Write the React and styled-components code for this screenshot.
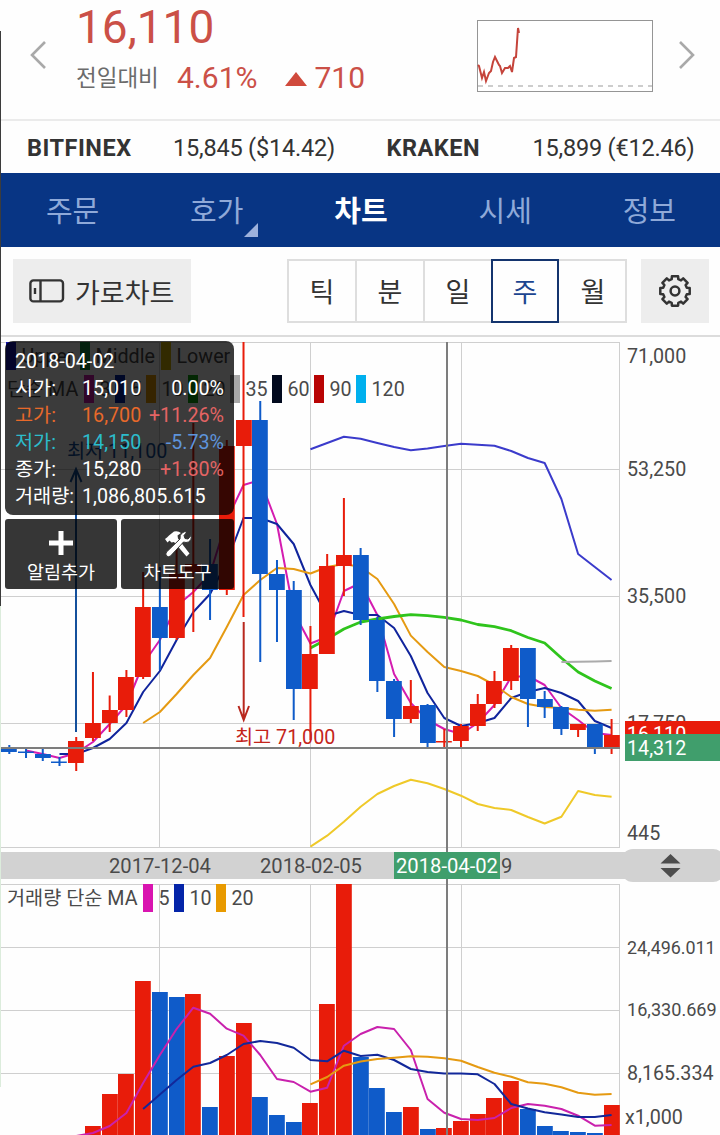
import styled, { createGlobalStyle } from "styled-components";

const UP = "#e81c0a";
const DOWN = "#0f5bc9";

const FIRST_X = 9.3;
const STEP = 16.73;
const xAt = (index) => FIRST_X + STEP * index;

// [high, bodyTop, bodyBottom, low, color]
const candles = [
  [745, 747, 752, 754, DOWN],
  [748, 751.5, 753, 758, DOWN],
  [748.5, 754, 758, 761, DOWN],
  [757, 761.5, 763, 766, DOWN],
  [737, 741, 763, 771, UP],
  [672, 723, 738, 741, UP],
  [695.5, 710, 723, 732, UP],
  [670, 677, 710, 717, UP],
  [572, 607, 677, 679, UP],
  [567, 607, 638, 670, DOWN],
  [547, 574, 638, 640, UP],
  [423, 564, 572, 632, UP],
  [539, 564, 590, 620, DOWN],
  [440, 446, 590, 595, UP],
  [342, 420, 446, 617, UP],
  [401, 420, 574, 662, DOWN],
  [560, 574, 590, 642, DOWN],
  [581, 590, 689, 720, DOWN],
  [626, 654, 689, 740, UP],
  [554, 566, 654, 654, UP],
  [498, 555, 566, 596, UP],
  [548, 555, 620, 625, DOWN],
  [617, 620, 681, 692, DOWN],
  [679, 681, 719, 737, DOWN],
  [680, 706, 719, 723, UP],
  [704, 705, 743, 747, DOWN],
  [729, 741, 742.5, 747, UP],
  [724, 726, 741, 747, UP],
  [694, 704, 726, 731, UP],
  [671, 681, 704, 708, UP],
  [645, 648, 681, 690, UP],
  [648, 648, 699, 727, DOWN],
  [691, 699, 707, 718, DOWN],
  [706, 707, 729, 735, DOWN],
  [724, 724, 730, 737, UP],
  [724, 724, 747, 754, DOWN],
  [719, 735, 747, 754, UP],
];

const volumes = [
  [1126, UP], [1094, UP], [1074, UP], [981, UP], [992, DOWN], [997, DOWN],
  [994, UP], [1107, DOWN], [1056, UP], [1023, UP], [1097, DOWN], [1115, DOWN],
  [1122, DOWN], [1103, UP], [1004, UP], [884, UP], [1057, DOWN], [1088, DOWN],
  [1112, DOWN], [1107, UP], [1129, DOWN], [1128, UP], [1121, UP], [1114, UP],
  [1098, UP], [1081, UP], [1109, DOWN], [1126, DOWN], [1131, DOWN],
  [1132, DOWN], [1133, DOWN], [1105, UP],
];

const priceLines = [
  { color: "#d41cb0", from: 1, values: [750.5, 754, 758, 753, 742, 724, 705, 664, 640, 606, 592, 574, 520, 485, 480, 524, 612, 643.5, 637, 591, 583, 615, 674, 703, 720, 729, 734, 723, 705, 677, 676, 685, 708, 720, 733, 735] },
  { color: "#10249c", from: 3, values: [754, 754, 748, 739, 723, 692, 671, 640, 612, 594, 562, 518, 518, 524, 544, 585, 616, 611, 615, 615, 628, 656, 693, 718, 726, 723, 718, 698, 692, 688, 693, 701, 721, 728] },
  { color: "#e59a12", from: 8, values: [723, 712, 694, 675, 658, 627, 595, 580, 568, 569, 573.5, 567, 564, 567, 579, 604, 635.6, 652, 667, 671, 676, 685, 697, 704, 707, 708, 709.7, 710.7, 709.7] },
  { color: "#2fc41c", width: 2.8, from: 18, values: [648, 639, 629, 622, 619, 616.5, 614.7, 615.7, 617.3, 620, 624.5, 626.7, 630.7, 637.5, 643, 658, 672, 681, 688.5] },
  { color: "#ababab", from: 33, values: [662, 661.8, 661.4, 661] },
  { color: "#3b3bcb", from: 18, values: [449.3, 443, 436.7, 438.7, 443, 447, 450.3, 448.5, 446, 443.7, 444.8, 445.7, 451, 458, 463, 499, 554, 567, 580] },
  { color: "#efc929", from: 18, values: [846.7, 835.7, 821.7, 806.7, 794, 786, 779.7, 783.3, 789, 795.7, 804, 808, 810, 817, 823.5, 816.7, 791, 795, 796.7] },
];

const volumeLines = [
  { color: "#c921ad", from: 4, values: [1136, 1133, 1126, 1113, 1083, 1055, 1029, 1007.7, 1013.7, 1028.7, 1035.7, 1055, 1079, 1082, 1091.7, 1087.7, 1045.7, 1034, 1027, 1029, 1050, 1099, 1112.7, 1119, 1120, 1118, 1108, 1104, 1105.7, 1109, 1115.7, 1125.7, 1125] },
  { color: "#12289a", from: 8, values: [1109, 1094.5, 1080, 1066.7, 1063, 1055, 1044, 1041, 1043, 1047.7, 1060, 1061.3, 1050.7, 1056, 1054.7, 1060, 1069, 1072, 1073.5, 1073.5, 1074.3, 1084, 1104, 1108.5, 1112.3, 1114.5, 1117, 1117, 1115] },
  { color: "#e59a12", from: 18, values: [1084.3, 1077, 1065.7, 1061.5, 1059, 1057.7, 1056.3, 1056.7, 1058.3, 1060.7, 1067, 1072.7, 1076.7, 1082.3, 1083.7, 1087.3, 1092.7, 1094.7, 1094] },
];

const bandLegend = [
  { x: 6, color: "#1414b4", label: "Upper" },
  { x: 80, color: "#0f8a3c", label: "Middle" },
  { x: 161, color: "#d9b400", label: "Lower" },
];

const maLegend = [
  { x: 84, color: "#d41cb0", label: "3" },
  { x: 115, color: "#0424a8", label: "5" },
  { x: 146, color: "#e89a00", label: "10" },
  { x: 188, color: "#0fa80f", label: "20" },
  { x: 230, color: "#a8a8a8", label: "35" },
  { x: 272, color: "#020a1e", label: "60" },
  { x: 314, color: "#b80404", label: "90" },
  { x: 356, color: "#00b0ee", label: "120" },
];

const volumeLegend = [
  { x: 143, color: "#d914b0", label: "5" },
  { x: 174, color: "#0424a8", label: "10" },
  { x: 216, color: "#e89a00", label: "20" },
];

const quoteRows = [
  { label: "시가:", value: "15,010", rate: "0.00%", color: "#fff", rateColor: "#fff" },
  { label: "고가:", value: "16,700", rate: "+11.26%", color: "#e8692a", rateColor: "#e46464" },
  { label: "저가:", value: "14,150", rate: "-5.73%", color: "#2cbccb", rateColor: "#5e94dc" },
  { label: "종가:", value: "15,280", rate: "+1.80%", color: "#fff", rateColor: "#e46464" },
  { label: "거래량:", value: "1,086,805.615", color: "#fff" },
];

const tabs = [
  { label: "주문" },
  { label: "호가", more: true },
  { label: "차트", active: true },
  { label: "시세" },
  { label: "정보" },
];

const periods = ["틱", "분", "일", "주", "월"];

const gearPath = () => {
  const teeth = 8;
  const points = [];
  for (let i = 0; i < teeth; i++) {
    const base = (i * 2 * Math.PI) / teeth - Math.PI / 2;
    [[-0.27, 12.2], [-0.21, 15], [0.21, 15], [0.27, 12.2]].forEach(([offset, r]) => {
      points.push(`${(17 + r * Math.cos(base + offset)).toFixed(1)},${(17 + r * Math.sin(base + offset)).toFixed(1)}`);
    });
  }
  return `M${points.join("L")}Z`;
};

const Series = ({ color, width = 2, from, values }) => (
  <polyline
    fill="none"
    stroke={color}
    strokeWidth={width}
    strokeLinejoin="round"
    points={values.map((y, i) => `${xAt(from + i)},${y}`).join(" ")}
  />
);

const Legend = ({ items, top }) => (
  <g>
    {items.map((item) => (
      <g key={item.label}>
        <rect x={item.x} y={top} width="10" height="28" fill={item.color} />
        <ChartText x={item.x + 15.5} y={top + 21}>{item.label}</ChartText>
      </g>
    ))}
  </g>
);

const Chart = () => (
  <ChartCanvas viewBox="0 337 720 798">
    <g stroke="#cfcfcf" strokeWidth="1">
      {[342.5, 469.5, 596.5, 723.5, 847.5, 884.5, 947.5, 1010.5, 1073.5].map((y) => (
        <line key={y} x1="1" x2="620" y1={y} y2={y} />
      ))}
      {[159.5, 310.5, 461.5, 619.5].map((x) => (
        <path key={x} d={`M${x} 342V848M${x} 884V1135`} />
      ))}
    </g>

    <Legend items={bandLegend} top={342} />
    <ChartText x="7" y="396">단순 MA</ChartText>
    <Legend items={maLegend} top={375} />

    {priceLines.map((line) => <Series key={line.color} {...line} />)}

    {candles.map(([high, top, bottom, low, color], i) => (
      <g key={i} fill={color}>
        <rect x={xAt(i) - 1} y={high} width="2" height={low - high} />
        <rect x={Math.max(1, Math.round(xAt(i) - 8))} y={top} width="15.8" height={bottom - top} />
      </g>
    ))}

    <path d="M76 732V470M70.5 482L76 469L81.5 482" fill="none" stroke="#14509c" strokeWidth="2" />
    <ChartText x="67" y="458" $color="#14509c">최저 11,100</ChartText>
    <path d="M243.7 622V719M238.5 706L243.7 720L249 706" fill="none" stroke="#b8281e" strokeWidth="2" />
    <ChartText x="235" y="744" $color="#c4241a">최고 71,000</ChartText>

    <ChartText x="7" y="905">거래량 단순 MA</ChartText>
    <Legend items={volumeLegend} top={884} />
    {volumes.map(([top, color], i) => (
      <rect key={i} x={Math.round(xAt(i + 5) - 8)} y={top} width="15.8" height={1135 - top} fill={color} />
    ))}
    {volumeLines.map((line) => <Series key={line.color} {...line} />)}

    <path d="M1 748H620M447 342V1135" stroke="#7d7d7d" strokeWidth="2" />

    <ChartText x="627" y="363">71,000</ChartText>
    <ChartText x="627" y="476">53,250</ChartText>
    <ChartText x="627" y="603">35,500</ChartText>
    <ChartText x="627" y="730">17,750</ChartText>
    <rect x="625" y="721" width="95" height="27" fill="#e81c0a" />
    <ChartText x="627" y="741" $color="#fff">16,110</ChartText>
    <rect x="625" y="734" width="95" height="27" fill="#409e6c" />
    <ChartText x="627" y="755" $color="#fff">14,312</ChartText>
    <ChartText x="627" y="840">445</ChartText>
    <ChartText x="627" y="954" $size={17.9}>24,496.011</ChartText>
    <ChartText x="627" y="1016" $size={18.1}>16,330.669</ChartText>
    <ChartText x="627" y="1080" $size={19.7}>8,165.334</ChartText>
    <ChartText x="625" y="1124">x1,000</ChartText>

    <rect x="1" y="852" width="640" height="27" fill="#d2d2d2" />
    <rect x="621" y="849" width="104" height="33" rx="12" fill="#d2d2d2" />
    <path d="M660.5 863.5L670.5 854L680.5 863.5ZM660.5 868L670.5 877.5L680.5 868Z" fill="#4d4d4d" />
    <ChartText x="109" y="873" $size={20.2}>2017-12-04</ChartText>
    <ChartText x="260" y="873" $size={20.2}>2018-02-05</ChartText>
    <ChartText x="501" y="873" $size={20.2}>9</ChartText>
    <rect x="394" y="852" width="106" height="27" fill="#409e6c" />
    <ChartText x="396" y="873" $color="#fff" $size={20.2}>2018-04-02</ChartText>
  </ChartCanvas>
);

const App = () => {
  return (
    <Page>
      <GlobalStyle />
      <Header>
        <Arrow viewBox="0 0 16 28"><path d="M15 1L2 14L15 27" /></Arrow>
        <PriceBlock>
          <Price>16,110</Price>
          <Change>
            <ChangeLabel>전일대비</ChangeLabel>
            <ChangeValue>4.61%</ChangeValue>
            <UpMark viewBox="0 0 22 14"><path d="M11 0L22 14H0Z" /></UpMark>
            <ChangeValue>710</ChangeValue>
          </Change>
        </PriceBlock>
        <Spark viewBox="0 0 176 72">
          <rect x="0.5" y="0.5" width="175" height="71" fill="#fff" stroke="#959595" />
          <path d="M1 66H175" stroke="#bdbdbd" strokeWidth="1.5" strokeDasharray="5 5" />
          <path
            d="M1 45L2 46L5 58L7 52L9 61L12 53L14 51L16 42L18 37L20 41L22 45L23 46L25 53L28 48L31 48L33 46L35 52L37 38L39 37L41 8L42 13"
            fill="none"
            stroke="#c5443b"
            strokeWidth="2"
          />
        </Spark>
        <Arrow viewBox="0 0 16 28"><path d="M1 1L14 14L1 27" /></Arrow>
      </Header>

      <Exchanges>
        <Exchange><ExchangeName>BITFINEX</ExchangeName>15,845 ($14.42)</Exchange>
        <Exchange><ExchangeName>KRAKEN</ExchangeName>15,899 (€12.46)</Exchange>
      </Exchanges>

      <Nav>
        {tabs.map((tab) => (
          <Tab key={tab.label} $active={tab.active}>
            {tab.label}
            {tab.more ? <Corner /> : null}
          </Tab>
        ))}
      </Nav>

      <Toolbar>
        <LandscapeButton>
          <svg width="36" height="24" viewBox="0 0 36 24" fill="none" stroke="#333" strokeWidth="2.4">
            <rect x="1.4" y="1.4" width="32.6" height="21" rx="3" />
            <path d="M11.5 1V22M6 9V15" />
          </svg>
          가로차트
        </LandscapeButton>
        <Periods>
          {periods.map((period) => <Period key={period} $active={period === "주"}>{period}</Period>)}
        </Periods>
        <SettingsButton>
          <svg width="34" height="34" viewBox="0 0 34 34" fill="none" stroke="#333" strokeWidth="2.5" strokeLinejoin="round">
            <path d={gearPath()} />
            <circle cx="17" cy="17" r="4.4" />
          </svg>
        </SettingsButton>
      </Toolbar>

      <ChartArea>
        <Chart />
        <Overlay>
          <QuoteBox>
            <QuoteDate>2018-04-02</QuoteDate>
            {quoteRows.map((row) => (
              <QuoteRow key={row.label} $color={row.color}>
                <QuoteLabel>{row.label}</QuoteLabel>
                <span>{row.value}</span>
                {row.rate ? <QuoteRate $color={row.rateColor}>{row.rate}</QuoteRate> : null}
              </QuoteRow>
            ))}
          </QuoteBox>
          <Tools>
            <ToolButton>
              <svg width="26" height="26" viewBox="0 0 26 26" stroke="#fff" strokeWidth="5">
                <path d="M13 1V25M1 13H25" />
              </svg>
              알림추가
            </ToolButton>
            <ToolButton>
              <svg width="28" height="28" viewBox="0 0 28 28" fill="#fff">
                <path d="M5 5.5L10 1.5Q14 0.5 17 3L13.5 5.5L14 8.5L25.5 23.5L22.5 26.5L10 12L7.5 12.5L5.5 10.5L3.5 12.5L1 9L3 7.5Z" />
                <path
                  d="M27 5.5Q28 10 24.5 12Q22 13 19.5 12L6.5 26Q4.5 27.5 2.5 26Q1 24 2.5 22L16 9Q15.5 5 18 3Q20.5 1 23 2L20 5.5L21 8.5L24 9Z"
                  stroke="#333"
                  strokeWidth="1"
                />
              </svg>
              차트도구
            </ToolButton>
          </Tools>
        </Overlay>
      </ChartArea>
    </Page>
  );
};

const GlobalStyle = createGlobalStyle`
  * {
    box-sizing: border-box;
  }

  body {
    margin: 0;
    background-color: #fefefe;
    font-family: Roboto, "Noto Sans CJK KR", sans-serif;
  }

  svg {
    flex: none;
    display: block;
  }
`;

const Page = styled.div`
  width: 720px;
  height: 1135px;
  overflow: hidden;
  padding-left: 1px;
  background: linear-gradient(#fefefe 31px, #3c3c3c 31px, #3c3c3c 606px, #dcecdc 606px, #dcecdc 1087px, #fefefe 1087px) left / 1px 100% no-repeat;
`;

const Header = styled.div`
  display: flex;
  align-items: flex-start;
  height: 121px;
  padding: 0 25px 0 29px;
  border-bottom: 2px solid #ebebeb;
`;

const Arrow = styled.svg`
  width: 16px;
  height: 28px;
  margin-top: 41px;
  fill: none;
  stroke: #a9a9a9;
  stroke-width: 2.6px;
`;

const PriceBlock = styled.div`
  width: 431px;
  padding: 0 0 0 30px;
  color: #cb5047;
`;

const Price = styled.div`
  height: 54px;
  font-size: 46px;
  line-height: 54px;
`;

const Change = styled.div`
  display: flex;
  align-items: center;
  height: 46px;
`;

const ChangeLabel = styled.span`
  width: 101px;
  margin-top: -2px;
  color: #6b6b6b;
  font-size: 22.5px;
`;

const ChangeValue = styled.span`
  font-size: 30px;
`;

const UpMark = styled.svg`
  width: 22px;
  height: 14px;
  margin: 3px 7px 0 28px;
  fill: #d04a3c;
`;

const Spark = styled.svg`
  width: 176px;
  height: 72px;
  margin: 20px 26px 0 0;
`;

const Exchanges = styled.div`
  display: flex;
  height: 52px;
`;

const Exchange = styled.div`
  display: flex;
  align-items: center;
  width: 360px;
  padding: 2px 0 0 26px;
  color: #333;
  font-size: 23.5px;
  letter-spacing: -0.2px;
`;

const ExchangeName = styled.span`
  width: 146px;
  font-weight: 700;
  letter-spacing: 0.5px;
`;

const Nav = styled.div`
  display: flex;
  height: 74px;
  background-color: #083584;
`;

const Tab = styled.div`
  position: relative;
  display: flex;
  flex: 0 0 144.2px;
  align-items: center;
  justify-content: center;
  padding: 0 1px 3px 0;
  color: ${({ $active }) => ($active ? "#fff" : "#8fa9d8")};
  font-size: 29px;
  font-weight: ${({ $active }) => ($active ? 700 : 400)};
`;

const Corner = styled.span`
  position: absolute;
  right: 31px;
  bottom: 10px;
  border-left: 14px solid transparent;
  border-bottom: 14px solid #9db1dc;
`;

const Toolbar = styled.div`
  display: flex;
  align-items: center;
  height: 90px;
  padding: 0 11px 0 12px;
  border-bottom: 2px solid #dcdcdc;
  color: #333;
  font-size: 27px;
`;

const LandscapeButton = styled.div`
  display: flex;
  align-items: center;
  gap: 10px;
  width: 178px;
  height: 64px;
  padding-left: 16px;
  background-color: #ededed;
`;

const Periods = styled.div`
  display: flex;
  margin-left: 96px;
`;

const Period = styled.div`
  position: relative;
  z-index: ${({ $active }) => ($active ? 1 : 0)};
  display: flex;
  align-items: center;
  justify-content: center;
  width: ${({ $active }) => ($active ? 68 : 70)}px;
  height: 64px;
  margin-right: ${({ $active }) => ($active ? 0 : -2)}px;
  padding-bottom: 1px;
  border: 2px solid ${({ $active }) => ($active ? "#14346e" : "#dedede")};
  color: ${({ $active }) => ($active ? "#1c4590" : "#333")};

  &:last-child {
    width: 68px;
    margin-right: 0;
    padding-left: 2px;
    border-left-width: 0;
  }
`;

const SettingsButton = styled.div`
  display: flex;
  align-items: center;
  justify-content: center;
  width: 68px;
  height: 64px;
  margin-left: auto;
  background-color: #ededed;
`;

const ChartArea = styled.div`
  position: relative;
  margin-left: -1px;
`;

const ChartCanvas = styled.svg`
  width: 720px;
  height: 798px;
`;

const ChartText = styled.text`
  fill: ${({ $color }) => $color || "#4a4a4a"};
  font-size: ${({ $size }) => $size || 19.7}px;
`;

const Overlay = styled.div`
  position: absolute;
  top: 4px;
  left: 5px;
  width: 229px;
`;

const QuoteBox = styled.div`
  height: 174px;
  padding: 7px 10px 0 10px;
  border-radius: 8px;
  background-color: rgba(0, 0, 0, 0.77);
  color: #fff;
  font-size: 19.7px;
`;

const QuoteDate = styled.div`
  height: 27px;
  line-height: 27px;
`;

const QuoteRow = styled.div`
  display: flex;
  height: 27px;
  color: ${({ $color }) => $color};
  line-height: 27px;
`;

const QuoteLabel = styled.span`
  width: 67px;
`;

const QuoteRate = styled.span`
  margin-left: auto;
  color: ${({ $color }) => $color};
`;

const Tools = styled.div`
  display: grid;
  grid-template-columns: 112px 113px;
  gap: 4px;
  margin-top: 4px;
`;

const ToolButton = styled.div`
  display: flex;
  flex-direction: column;
  align-items: center;
  justify-content: space-between;
  height: 70px;
  padding: 11px 0 3px;
  border-radius: 3px;
  background-color: rgba(0, 0, 0, 0.79);
  color: #fff;
  font-size: 18.5px;
  line-height: 25px;
`;

export default App;
